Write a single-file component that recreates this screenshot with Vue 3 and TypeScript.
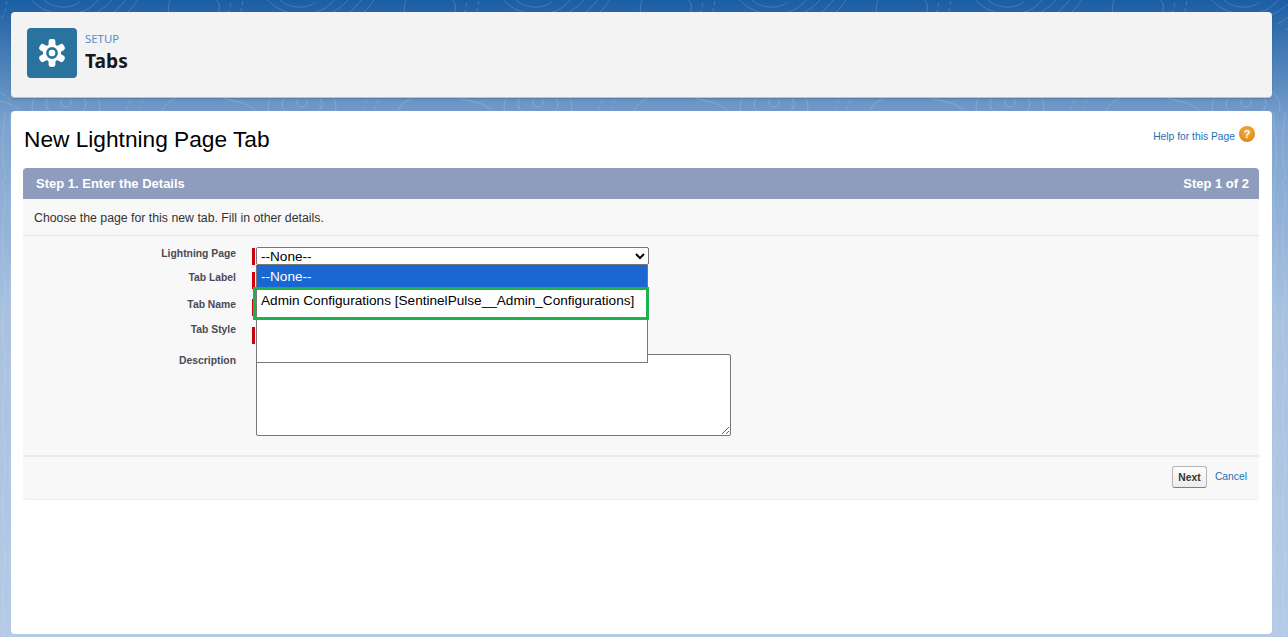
<script setup lang="ts">
const rows = [
  { label: 'Lightning Page', cls: 'r1' },
  { label: 'Tab Label', cls: 'r2' },
  { label: 'Tab Name', cls: 'r3' },
  { label: 'Tab Style', cls: 'r4' },
]
const lobes = [0, 60, 120, 180, 240, 300]
</script>

<template>
  <div class="page">
    <svg class="topo" width="1288" height="637" fill="none" stroke="#fff" stroke-opacity=".16">
      <defs>
        <pattern id="contour" width="236" height="120" patternUnits="userSpaceOnUse" patternTransform="translate(20 -6)">
          <path d="M10 4c14 18 44 22 62 8s8-22-4-26" />
          <path d="M24 6c8 8 26 10 36 2" />
          <circle cx="46" cy="108" r="5" />
          <ellipse cx="46" cy="110" rx="20" ry="13" />
          <ellipse cx="46" cy="112" rx="34" ry="22" />
          <path d="M100-4c-8 12-18 20-30 26M112-4c-8 14-20 26-34 34M124-4c-8 16-22 30-38 40" />
          <path d="M104 120c4-8 6-14 12-20M116 120c4-8 6-14 12-20" stroke-dasharray="3 3" />
          <path d="M150 22c-6-14 4-28 22-26s32 10 26 24-42 16-48 2z" />
          <path d="M140 120c6-16 30-26 56-18s36 6 40 18" />
          <path d="M146 100c20-8 58-10 80 4" stroke-dasharray="5 4" />
          <path d="M210 2c2 8 0 14-4 20M222 0c2 8 0 16-4 24" stroke-dasharray="4 3" />
        </pattern>
        <pattern id="contour-side" width="16" height="90" patternUnits="userSpaceOnUse">
          <path d="M2 0c10 22-6 40 4 90" />
          <path d="M12 0c-8 26 6 54-2 90" />
        </pattern>
      </defs>
      <rect x="0" y="0" width="1288" height="112" fill="url(#contour)" stroke="none" />
      <rect x="0" y="112" width="11" height="525" fill="url(#contour-side)" stroke="none" opacity=".7" />
      <rect x="1272" y="112" width="16" height="525" fill="url(#contour-side)" stroke="none" opacity=".7" />
    </svg>

    <header class="head card">
      <div class="tile">
        <svg width="30" height="30" viewBox="0 0 30 30">
          <rect
            v-for="a in lobes"
            :key="a"
            x="11.6"
            y="1"
            width="6.8"
            height="9"
            rx="2.4"
            fill="#fff"
            :transform="`rotate(${a} 15 15)`"
          />
          <circle cx="15" cy="15" r="9" fill="#fff" />
          <circle cx="15" cy="15" r="4.6" fill="none" stroke="#2a739f" stroke-width="2.6" />
        </svg>
      </div>
      <div class="titles">
        <div class="eyebrow">SETUP</div>
        <div class="name">Tabs</div>
      </div>
    </header>

    <main class="body card">
      <div class="title-row">
        <h1>New Lightning Page Tab</h1>
        <a class="help"><span class="help-text">Help for this Page</span> <span class="q">?</span></a>
      </div>

      <section class="panel">
        <div class="bar">
          <span>Step 1. Enter the Details</span>
          <span>Step 1 of 2</span>
        </div>
        <p class="intro">Choose the page for this new tab. Fill in other details.</p>

        <div class="form">
          <div v-for="r in rows" :key="r.label" class="row" :class="r.cls">
            <label>{{ r.label }}</label>
            <i class="req"></i>
          </div>
          <div class="row desc">
            <label>Description</label>
            <textarea class="area"></textarea>
          </div>

          <div class="drop">
            <select class="sel"><option>--None--</option></select>
            <ul class="list">
              <li class="on">--None--</li>
              <li>Admin Configurations [SentinelPulse__Admin_Configurations]</li>
            </ul>
            <div class="mark"></div>
          </div>
        </div>

        <footer class="foot">
          <button class="next" type="button">Next</button>
          <a class="cancel">Cancel</a>
        </footer>
      </section>
    </main>
  </div>
</template>

<style>
html, body { margin: 0; overflow: hidden; }
</style>

<style scoped>
.page {
  position: relative;
  box-sizing: border-box;
  height: 637px;
  padding: 12px 16px 3px 11px;
  display: flex;
  flex-direction: column;
  gap: 13px;
  overflow: hidden;
  background: linear-gradient(180deg, #1b5ea4 0%, #7ea3cf 20%, #a9c2e0 50%, #b4cae5 100%);
  font-family: "Liberation Sans", Arial, sans-serif;
}
.topo { position: absolute; left: 0; top: 0; }
.card { position: relative; border-radius: 4px; }
.head {
  height: 86px;
  flex: none;
  box-sizing: border-box;
  background: #f3f3f3;
  border-bottom: 1px solid #c4c4c4;
  box-shadow: 0 1px 2px rgba(0, 0, 0, .18);
  padding: 16px;
  display: flex;
  align-items: flex-start;
  gap: 8px;
}
.tile {
  width: 50px;
  height: 50px;
  background: #2a739f;
  border-radius: 4px;
  display: flex;
  align-items: center;
  justify-content: center;
}
.titles { font-family: "Noto Sans", "Open Sans", sans-serif; padding-top: 2px; }
.eyebrow { font-size: 11.4px; line-height: 17px; color: #4f8fbf; }
.name { font-size: 19.2px; line-height: 27px; font-weight: 700; color: #181818; }
.body {
  flex: 1;
  background: #fff;
  padding: 0 13px 0 12px;
}
.title-row {
  height: 57px;
  display: flex;
  justify-content: space-between;
  align-items: flex-start;
}
h1 {
  margin: 14px 0 0 1px;
  font-size: 22.7px;
  line-height: 28px;
  font-weight: 400;
  color: #000;
}
.help {
  margin: 15px 4px 0 0;
  font-size: 10.3px;
  line-height: 16px;
  color: #1f6fb2;
  display: flex;
  align-items: flex-start;
  gap: 4px;
}
.help-text { padding-top: 3px; }
.q {
  width: 16px;
  height: 16px;
  border-radius: 50%;
  background: radial-gradient(circle at 50% 35%, #f4b03e, #d97e0c);
  color: #fff;
  font-size: 11px;
  font-weight: 700;
  line-height: 16px;
  text-align: center;
}
.panel {
  height: 331px;
  background: #f8f8f8;
  border-radius: 4px;
  box-shadow: 0 1px 0 #eee;
  display: flex;
  flex-direction: column;
}
.bar {
  height: 31px;
  flex: none;
  box-sizing: border-box;
  padding: 0 10px 0 13px;
  background: #8e9dbd;
  border-radius: 4px 4px 0 0;
  color: #fff;
  font-size: 13px;
  font-weight: 700;
  display: flex;
  align-items: center;
  justify-content: space-between;
}
.intro {
  margin: 0;
  height: 37px;
  flex: none;
  box-sizing: border-box;
  padding: 11px 11px 0;
  font-size: 12.3px;
  line-height: 16px;
  color: #333;
  border-bottom: 1px solid #e4e4e4;
}
.form { position: relative; flex: 1; }
.row { position: absolute; left: 0; display: flex; align-items: flex-start; }
.row label {
  width: 213px;
  padding-top: 1px;
  text-align: right;
  font-size: 10.35px;
  font-weight: 700;
  line-height: 14px;
  color: #4a4a56;
}
.req {
  width: 3px;
  height: 17px;
  margin: 2px 0 0 16px;
  background: #d0000f;
}
.r1 { top: 10px; }
.r2 { top: 34px; }
.r3 { top: 61px; }
.r4 { top: 86px; }
.r4 .req { margin-top: 5px; }
.desc { top: 117px; }
.area {
  box-sizing: border-box;
  width: 475px;
  height: 82px;
  margin: 1px 0 0 20px;
  border: 1px solid #767676;
  border-radius: 2px;
  background: #fff;
  display: block;
}
.drop {
  position: absolute;
  left: 233px;
  top: 11px;
  width: 393px;
}
.sel {
  display: block;
  box-sizing: border-box;
  width: 393px;
  height: 18px;
  padding: 0;
  border: 1px solid #767676;
  border-radius: 2px;
  background: #fff;
  font-family: "Liberation Sans", Arial, sans-serif;
  font-size: 13.6px;
  color: #000;
}
.list {
  margin: 0;
  padding: 0;
  list-style: none;
  box-sizing: border-box;
  width: 392px;
  height: 98px;
  background: #fff;
  border: 1px solid #767676;
  border-top: 0;
  font-size: 13.6px;
  color: #000;
}
.list li { height: 28px; line-height: 28px; padding-left: 4px; }
.list .on { height: 22px; line-height: 24px; background: #1a66d2; color: #fff; }
.mark {
  position: absolute;
  left: -3px;
  top: 40px;
  width: 396px;
  height: 33px;
  box-sizing: border-box;
  border: 3px solid #1fb14f;
}
.foot {
  height: 44px;
  flex: none;
  box-sizing: border-box;
  border-top: 2px solid #ebebeb;
  display: flex;
  align-items: flex-start;
  justify-content: flex-end;
  gap: 8px;
  padding: 9px 12px 0 0;
}
.next {
  box-sizing: border-box;
  width: 35px;
  height: 22px;
  padding: 0;
  border: 1px solid #b5b5b5;
  border-bottom-color: #7f7f7f;
  border-radius: 3px;
  background: linear-gradient(#fdfdfd, #ececec);
  font-family: "Liberation Sans", Arial, sans-serif;
  font-size: 10.3px;
  font-weight: 700;
  color: #333;
}
.cancel { font-size: 10.3px; line-height: 22px; color: #1f6fb2; }
</style>
